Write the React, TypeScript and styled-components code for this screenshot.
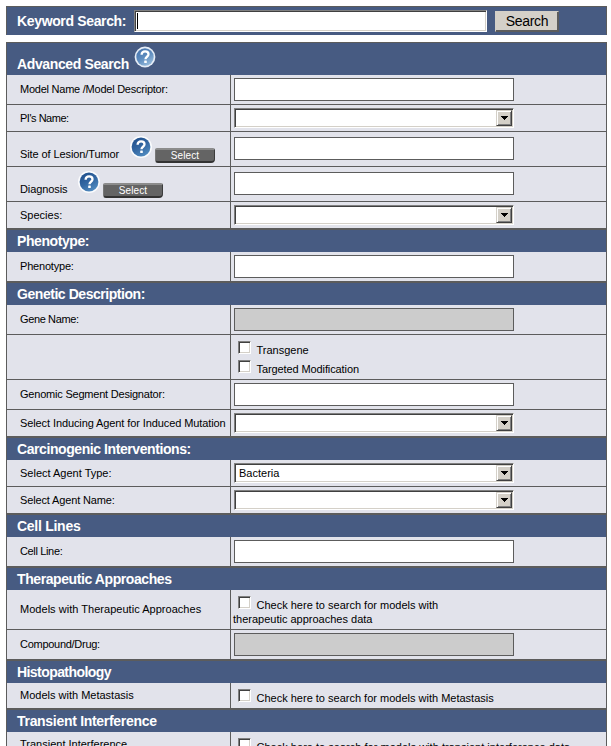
import React from 'react';
import styled, { createGlobalStyle, css } from 'styled-components';

const GlobalStyle = createGlobalStyle`
  *, *::before, *::after { box-sizing: border-box; }
  html, body { margin: 0; background: #fff; overflow: hidden; }
  body { font-family: "Liberation Sans", Arial, sans-serif; font-size: 11px; line-height: 14px; color: #000; }
`;

const Page = styled.main`
  width: 611px;
  height: 746px;
  padding: 6px 4px 0 6px;
  overflow: hidden;
`;

const KeywordBar = styled.form`
  display: flex;
  width: 601px;
  height: 29px;
  margin-bottom: 7px;
  padding: 3px 0 0 10px;
  background: #475b82;
  border: 1px solid #5c5c5c;
  border-bottom-color: #475b82;
`;

const KeywordLabel = styled.label`
  width: 117px;
  color: #fff;
  font-size: 14px;
  font-weight: bold;
  line-height: 23px;
  letter-spacing: -0.35px;
  white-space: nowrap;
`;

const sunken = css`
  border: 1px solid;
  border-color: #808080 #fff #fff #808080;
  box-shadow: inset 1px 1px 0 #404040, inset -1px -1px 0 #d4d0c8;
  background: #fff;
`;

const KeywordField = styled.div`
  ${sunken}
  display: flex;
  width: 353px;
  height: 22px;
  padding: 2px;
`;

const Caret = styled.span`
  width: 1px;
  height: 16px;
  background: #000;
`;

const SearchButton = styled.button`
  width: 64px;
  height: 21px;
  margin: 1px 0 0 8px;
  padding: 0 0 1px;
  border: 1px solid;
  border-color: #d4d0c8 #5c5c5c #5c5c5c #d4d0c8;
  box-shadow: inset -1px -1px 0 #5c5c5c;
  background: #d4d0c8;
  font: 14px/18px "Liberation Sans", Arial, sans-serif;
  letter-spacing: -0.3px;
  color: #000;
`;

const Table = styled.section`
  width: 601px;
  border: solid #5c5c5c;
  border-width: 1px 1px 0;
`;

const SectionTitle = styled.h2<{ $tall?: boolean }>`
  display: flex;
  align-items: ${p => (p.$tall ? 'flex-start' : 'center')};
  gap: 5px;
  height: ${p => (p.$tall ? 32 : 23)}px;
  margin: 0;
  padding: ${p => (p.$tall ? '3px 0 0 10px' : '0 0 1px 10px')};
  background: #475b82;
  border-top: ${p => (p.$tall ? 0 : 1)}px solid #5c5c5c;
  color: #fff;
  font-size: 14px;
  line-height: 18px;
`;

const TitleText = styled.span<{ $spacing?: number; $drop?: number }>`
  margin-top: ${p => p.$drop ?? 0}px;
  letter-spacing: ${p => p.$spacing ?? 0}px;
  white-space: nowrap;
`;

const Row = styled.div<{ $height: number }>`
  display: grid;
  grid-template-columns: 224px 1fr;
  height: ${p => p.$height}px;
  background: #e2e3eb;
  border-bottom: 1px solid #5c5c5c;
`;

const LabelCell = styled.div<{ $media?: boolean; $raised?: boolean }>`
  display: flex;
  align-items: ${p => (p.$media ? 'flex-start' : 'center')};
  padding: 0 0 ${p => (p.$raised ? 2 : 0)}px 13px;
  border-right: 1px solid #5c5c5c;
`;

const LabelText = styled.span<{ $spacing?: number; $media?: boolean }>`
  margin-top: ${p => (p.$media ? 15 : 0)}px;
  letter-spacing: ${p => p.$spacing ?? 0}px;
  white-space: nowrap;
`;

const HelpSlot = styled.span`
  display: flex;
  width: 22px;
  height: 22px;
  margin: 4px 3px 0 auto;
`;

const MediaGroup = styled.div<{ $width: number }>`
  display: flex;
  width: ${p => p.$width}px;
`;

const SelectButton = styled.button`
  width: 60px;
  height: 15px;
  margin-top: 16px;
  padding: 0;
  border: 1px solid;
  border-width: 2px 1px 2px;
  border-color: #8c8c8c #3c3c3c #333 #777;
  border-radius: 2px 2px 4px 3px;
  background: #646464;
  color: #fff;
  font: 10px/11px "Liberation Sans", Arial, sans-serif;
  letter-spacing: 0.1px;
`;

const FieldCell = styled.div<{ $top?: number }>`
  padding: ${p => p.$top ?? 3}px 0 0 3px;
`;

const TextField = styled.input`
  display: block;
  width: 280px;
  height: 23px;
  padding: 0 4px;
  border: 1px solid #5c5c5c;
  border-radius: 0;
  background: #fff;
  &:disabled { background: #ccc; }
`;

const DropDown = styled.div`
  ${sunken}
  display: flex;
  justify-content: space-between;
  width: 280px;
  height: 20px;
  padding: 1px;
`;

const DropValue = styled.span`
  padding-left: 3px;
  line-height: 17px;
`;

const DropArrow = styled.span`
  display: flex;
  align-items: center;
  justify-content: center;
  width: 16px;
  height: 16px;
  border: 1px solid;
  border-color: #d4d0c8 #404040 #404040 #d4d0c8;
  box-shadow: inset 1px 1px 0 #fff, inset -1px -1px 0 #808080;
  background: #d4d0c8;
`;

const CheckLine = styled.label`
  display: flex;
  gap: 5px;
  height: 19px;
  padding-left: 4px;
`;

const CheckBox = styled.span`
  ${sunken}
  width: 13px;
  height: 13px;
`;

const CheckText = styled.span<{ $spacing?: number }>`
  margin-top: 2px;
  padding-left: 0.5px;
  letter-spacing: ${p => p.$spacing ?? 0}px;
  white-space: nowrap;
`;

const Continuation = styled.div`
  margin: -3px 0 0 -1px;
  white-space: nowrap;
`;

function Help({ id, light }: { id: string; light?: boolean }) {
  return (
    <svg width="22" height="22" viewBox="0 0 22 22" aria-label="Help">
      <defs>
        <linearGradient id={id} x1="0.2" y1="0" x2="0.8" y2="1">
          <stop offset="0" stopColor={light ? '#4674ad' : '#1f4f8c'} />
          <stop offset="0.5" stopColor={light ? '#5f8dbf' : '#3468a3'} />
          <stop offset="1" stopColor={light ? '#9cc0df' : '#5590c4'} />
        </linearGradient>
      </defs>
      <circle cx="11" cy="11" r={light ? 10.4 : 11} fill={light ? '#e6edf6' : '#fafbfd'} />
      <circle cx="11" cy="11" r={light ? 8.7 : 9.4} fill={`url(#${id})`} />
      <path d="M7.6 8.7C7.7 6.3 9.1 5.3 11.1 5.3c2.1 0 3.4 1.2 3.4 3 0 2.4-3 2.5-3 4.9" fill="none" stroke="#fff" strokeWidth="2.3" />
      <rect x="10.2" y="14.5" width="2.6" height="2.5" rx="0.5" fill="#fff" />
    </svg>
  );
}

function Select({ value }: { value?: string }) {
  return (
    <DropDown role="combobox">
      <DropValue>{value}</DropValue>
      <DropArrow>
        <svg width="7" height="4" viewBox="0 0 7 4" shapeRendering="crispEdges">
          <path d="M0 0h7v1H6v1H5v1H4v1H3V3H2V2H1V1H0z" fill="#000" />
        </svg>
      </DropArrow>
    </DropDown>
  );
}

function Check({ text, spacing }: { text: string; spacing?: number }) {
  return (
    <CheckLine>
      <CheckBox role="checkbox" />
      <CheckText $spacing={spacing}>{text}</CheckText>
    </CheckLine>
  );
}

interface FormRowProps {
  label?: string;
  height: number;
  spacing?: number;
  top?: number;
  children: React.ReactNode;
}

function FormRow({ label, height, spacing, top, children }: FormRowProps) {
  return (
    <Row $height={height}>
      <LabelCell $raised={height !== 27}><LabelText $spacing={spacing}>{label}</LabelText></LabelCell>
      <FieldCell $top={top}>{children}</FieldCell>
    </Row>
  );
}

function PickerRow({ label, width, spacing }: { label: string; width: number; spacing?: number }) {
  return (
    <Row $height={35}>
      <LabelCell $media>
        <MediaGroup $width={width}>
          <LabelText $media $spacing={spacing}>{label}</LabelText>
          <HelpSlot><Help id={`help-${label.charAt(0)}`} /></HelpSlot>
        </MediaGroup>
        <SelectButton type="button">Select</SelectButton>
      </LabelCell>
      <FieldCell $top={5}><TextField /></FieldCell>
    </Row>
  );
}

function Title({ children, spacing }: { children: string; spacing?: number }) {
  return <SectionTitle><TitleText $spacing={spacing}>{children}</TitleText></SectionTitle>;
}

export default function App() {
  return (
    <>
      <GlobalStyle />
      <Page>
        <KeywordBar>
          <KeywordLabel>Keyword Search:</KeywordLabel>
          <KeywordField><Caret /></KeywordField>
          <SearchButton type="button">Search</SearchButton>
        </KeywordBar>
        <Table>
          <SectionTitle $tall>
            <TitleText $drop={9} $spacing={-0.37}>Advanced Search</TitleText>
            <Help id="help-title" light />
          </SectionTitle>
          <FormRow label="Model Name /Model Descriptor:" spacing={-0.24} height={30}><TextField /></FormRow>
          <FormRow label="PI's Name:" spacing={-0.48} height={27}><Select /></FormRow>
          <PickerRow label="Site of Lesion/Tumor" spacing={-0.1} width={135} />
          <PickerRow label="Diagnosis" spacing={-0.1} width={83} />
          <FormRow label="Species:" height={27}><Select /></FormRow>
          <Title spacing={-0.42}>Phenotype:</Title>
          <FormRow label="Phenotype:" spacing={-0.2} height={30}><TextField /></FormRow>
          <Title spacing={-0.45}>Genetic Description:</Title>
          <FormRow label="Gene Name:" spacing={-0.37} height={30}><TextField disabled /></FormRow>
          <FormRow height={45} top={6}>
            <Check text="Transgene" />
            <Check text="Targeted Modification" spacing={-0.1} />
          </FormRow>
          <FormRow label="Genomic Segment Designator:" spacing={-0.21} height={30}><TextField /></FormRow>
          <FormRow label="Select Inducing Agent for Induced Mutation" spacing={-0.1} height={27}><Select /></FormRow>
          <Title spacing={-0.42}>Carcinogenic Interventions:</Title>
          <FormRow label="Select Agent Type:" height={27}><Select value="Bacteria" /></FormRow>
          <FormRow label="Select Agent Name:" spacing={-0.14} height={27}><Select /></FormRow>
          <Title spacing={-0.27}>Cell Lines</Title>
          <FormRow label="Cell Line:" spacing={-0.35} height={30}><TextField /></FormRow>
          <Title spacing={-0.41}>Therapeutic Approaches</Title>
          <FormRow label="Models with Therapeutic Approaches" spacing={0.03} height={40} top={6}>
            <Check text="Check here to search for models with" />
            <Continuation>therapeutic approaches data</Continuation>
          </FormRow>
          <FormRow label="Compound/Drug:" spacing={-0.28} height={30}><TextField disabled /></FormRow>
          <Title spacing={-0.57}>Histopathology</Title>
          <FormRow label="Models with Metastasis" height={26} top={6}>
            <Check text="Check here to search for models with Metastasis" />
          </FormRow>
          <Title spacing={-0.3}>Transient Interference</Title>
          <FormRow label="Transient Interference" height={26} top={6}>
            <Check text="Check here to search for models with transient interference data" spacing={0.02} />
          </FormRow>
        </Table>
      </Page>
    </>
  );
}
